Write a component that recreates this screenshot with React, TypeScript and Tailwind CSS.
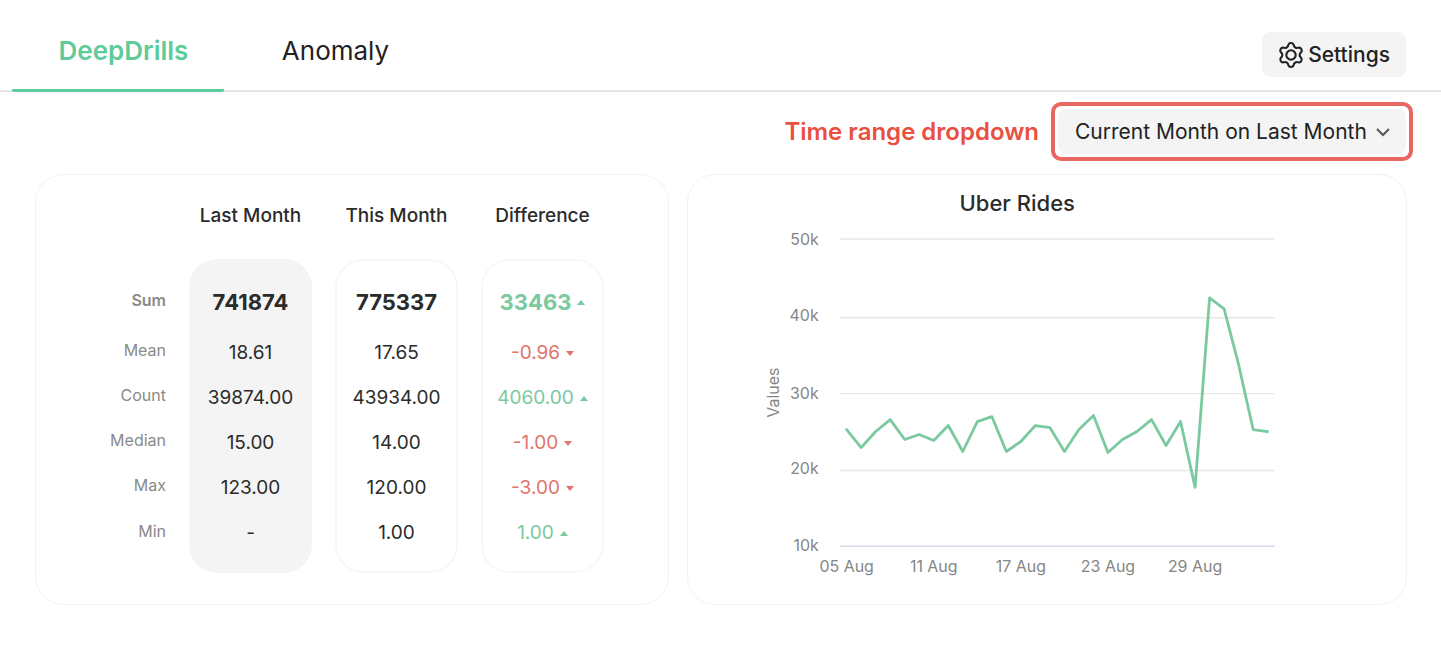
import { useState } from "react";

type Trend = "up" | "down";

interface Metric {
  name: string;
  last: string;
  current: string;
  diff: string;
  trend: Trend;
}

const METRICS: Metric[] = [
  { name: "Sum", last: "741874", current: "775337", diff: "33463", trend: "up" },
  { name: "Mean", last: "18.61", current: "17.65", diff: "-0.96", trend: "down" },
  { name: "Count", last: "39874.00", current: "43934.00", diff: "4060.00", trend: "up" },
  { name: "Median", last: "15.00", current: "14.00", diff: "-1.00", trend: "down" },
  { name: "Max", last: "123.00", current: "120.00", diff: "-3.00", trend: "down" },
  { name: "Min", last: "-", current: "1.00", diff: "1.00", trend: "up" },
];

// Outline of a six-lobed cog centred on the origin
function cogPath(): string {
  const at = (deg: number, r: number) => {
    const a = (deg * Math.PI) / 180;
    return `${(r * Math.cos(a)).toFixed(2)} ${(r * Math.sin(a)).toFixed(2)}`;
  };
  let d = `M${at(-104, 10.6)}`;
  for (let i = 0; i < 6; i++) {
    const c = -90 + i * 60;
    d += ` C${at(c - 8, 12.6)} ${at(c + 8, 12.6)} ${at(c + 14, 10.6)}`;
    d += ` C${at(c + 21, 8.2)} ${at(c + 39, 8.2)} ${at(c + 46, 10.6)}`;
  }
  return d + "Z";
}

function CogIcon() {
  return (
    <svg viewBox="-13 -13 26 26" className="size-[26px]" fill="none" stroke="currentColor" strokeWidth="2.1" strokeLinejoin="round" aria-hidden="true">
      <path d={cogPath()} />
      <circle r="4.7" />
    </svg>
  );
}

function TrendMark({ trend }: { trend: Trend }) {
  return (
    <svg viewBox="0 0 8 5" className="h-[5px] w-2" fill="currentColor" aria-hidden="true">
      <path d={trend === "up" ? "M0 5 4 0l4 5z" : "M0 0h8L4 5z"} />
    </svg>
  );
}

function MetricsTable() {
  return (
    <table className="border-separate border-spacing-x-[23px] border-spacing-y-0 text-center text-[#2b2b2b]">
      <thead>
        <tr className="h-[84px] text-[19px] whitespace-nowrap">
          <td className="w-20" />
          <th scope="col" className="w-[123px] p-0 pb-0.5 font-medium">Last Month</th>
          <th scope="col" className="w-[123px] p-0 pb-0.5 font-medium">This Month</th>
          <th scope="col" className="w-[123px] p-0 pb-0.5 font-medium">Difference</th>
        </tr>
      </thead>
      <tbody>
        {METRICS.map((m, i) => {
          const first = i === 0;
          const last = i === METRICS.length - 1;
          const labelSpace = first ? "h-[70px] pt-3" : last ? "h-16 pb-5" : "h-[45px] pb-[3px]";
          const space = first ? "h-[70px] pt-[14px]" : last ? "h-16 pb-[14px]" : "h-[45px] pt-[3px]";
          const edge = first ? "rounded-t-[28px] border-t-2" : last ? "rounded-b-[28px] border-b-2" : "";
          const size = first ? "text-[22px] font-bold" : "text-[19px]";
          const tone = m.trend === "up" ? "text-[#7bc99f]" : "text-[#e0736c]";
          return (
            <tr key={m.name}>
              <th scope="row" className={`p-0 text-right text-base text-[#8a8a8a] ${labelSpace} ${first ? "font-semibold" : "font-normal"}`}>
                {m.name}
              </th>
              <td className={`border-x-2 border-[#f4f4f4] bg-[#f4f4f4] p-0 ${space} ${edge} ${size}`}>{m.last}</td>
              <td className={`border-x-2 border-[#f7f7f7] p-0 ${space} ${edge} ${size}`}>{m.current}</td>
              <td className={`border-x-2 border-[#f7f7f7] p-0 ${space} ${edge} ${size} ${tone}`}>
                <span className="inline-flex items-center gap-1.5">
                  {m.diff}
                  <TrendMark trend={m.trend} />
                </span>
              </td>
            </tr>
          );
        })}
      </tbody>
    </table>
  );
}

const RIDES = [
  205, 223, 207, 195, 215, 210, 216, 201, 227, 197, 192, 227, 217, 201, 203, 227, 205, 191, 228, 215, 207, 195, 221, 197,
  263, 73, 84, 140, 205, 207,
];
const Y_TICKS = [
  { label: "50k", line: 14, base: 20 },
  { label: "40k", line: 93, base: 96 },
  { label: "30k", line: 169, base: 174 },
  { label: "20k", line: 246, base: 250 },
  { label: "10k", line: 322, base: 327 },
];
const X_TICKS = ["05 Aug", "11 Aug", "17 Aug", "23 Aug", "29 Aug"];

function RidesChart() {
  const x = (i: number) => 159 + i * 14.55;
  return (
    <svg viewBox="0 0 659 380" className="block w-full" role="img" aria-label="Uber Rides" fontSize="16" fill="#868686">
      {Y_TICKS.map((t) => (
        <g key={t.label}>
          <line x1="152" x2="588" y1={t.line} y2={t.line} stroke={t.label === "10k" ? "#d3d9ea" : "#e6e6e6"} strokeWidth="1.5" />
          <text x="131" y={t.base} textAnchor="end">{t.label}</text>
        </g>
      ))}
      {X_TICKS.map((label, i) => (
        <text key={label} x={x(i * 6)} y="348" textAnchor="middle">{label}</text>
      ))}
      <text transform="translate(91 168) rotate(-90)" textAnchor="middle">Values</text>
      <polyline points={RIDES.map((y, i) => `${x(i)},${y}`).join(" ")} fill="none" stroke="#7bc99f" strokeWidth="2.8" strokeLinejoin="round" strokeLinecap="round" />
    </svg>
  );
}

export default function App() {
  const [tab, setTab] = useState("DeepDrills");
  return (
    <div className="min-h-screen bg-white font-['Inter',sans-serif] text-[#222]">
      <header className="flex items-start justify-between border-b-2 border-[#e6e6e6] pr-[35px] pl-3">
        <nav className="flex text-[26px] leading-8">
          {["DeepDrills", "Anomaly"].map((name) => (
            <button
              key={name}
              type="button"
              onClick={() => setTab(name)}
              className={`-mb-0.5 min-w-[212px] rounded-b-xs border-b-3 pt-[35px] pb-[22px] pl-[11px] ${
                tab === name ? "border-[#5fcb9a] font-semibold text-[#5fcb9a]" : "border-transparent"
              }`}
            >
              {name}
            </button>
          ))}
        </nav>
        <button type="button" className="mt-8 flex h-[45px] items-center gap-1 rounded-lg bg-[#f4f4f4] px-4 text-[21px] font-medium">
          <CogIcon />
          Settings
        </button>
      </header>

      <main>
        <div className="flex items-center justify-end gap-3 pt-2.5 pr-7">
          <label htmlFor="range" className="text-2xl font-semibold text-[#e9503f]">Time range dropdown</label>
          <div className="relative rounded-[10px] border-4 border-[#e96762] p-[3px]">
            <select id="range" className="h-[45px] w-[348px] appearance-none rounded-lg bg-[#f4f4f4] pl-[17px] text-[21px]">
              <option>Current Month on Last Month</option>
            </select>
            <svg viewBox="0 0 14 9" className="pointer-events-none absolute top-[22px] right-[19px] h-[9px] w-3.5" fill="none" stroke="#555" strokeWidth="2" aria-hidden="true">
              <path d="m1 1 6 6 6-6" />
            </svg>
          </div>
        </div>

        <div className="mt-[13px] grid grid-cols-[634fr_719fr] gap-[18px] pr-[34px] pl-[35px]">
          <section className="rounded-[28px] border border-[#f2f2f2] pl-[27px]">
            <MetricsTable />
          </section>
          <section className="rounded-[28px] border border-[#f2f2f2] pr-[60px]">
            <h2 className="pt-[13px] pb-[7px] text-center text-[22px] leading-[30px] font-medium text-[#2b2b2b]">Uber Rides</h2>
            <RidesChart />
          </section>
        </div>
      </main>
    </div>
  );
}
